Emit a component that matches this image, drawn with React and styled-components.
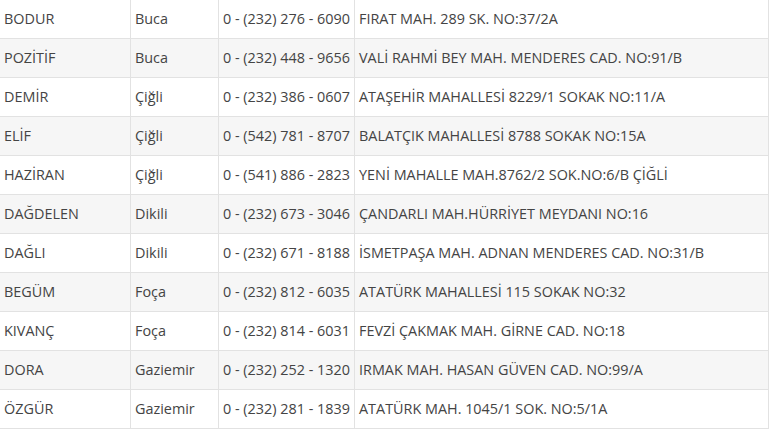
import React from 'react';
import styled, { createGlobalStyle } from 'styled-components';

const GlobalStyle = createGlobalStyle`
  html, body {
    margin: 0;
    padding: 0;
    background: #ffffff;
    overflow: hidden;
  }
`;

const Wrapper = styled.div`
  width: 770px;
  height: 429px;
  overflow: hidden;
  background: #ffffff;
`;

const Table = styled.table`
  border-collapse: collapse;
  margin-left: -1px;
  margin-top: -1px;
  width: 769px;
  table-layout: fixed;
  font-family: 'Open Sans', 'Noto Sans', sans-serif;
  font-size: 14.4px;
  color: #444444;
`;

const Col = styled.col`
  width: ${props => props.$width}px;
`;

const Row = styled.tr`
  background: ${props => (props.$striped ? '#f6f6f6' : '#ffffff')};
`;

const Cell = styled.td`
  height: 38px;
  padding: 0 4px;
  border: 1px solid #e2e2e2;
  white-space: nowrap;
  overflow: hidden;
  vertical-align: middle;
  line-height: 20px;
`;

const rows = [
  ['BODUR', 'Buca', '0 - (232) 276 - 6090', 'FIRAT MAH. 289 SK. NO:37/2A'],
  ['POZİTİF', 'Buca', '0 - (232) 448 - 9656', 'VALİ RAHMİ BEY MAH. MENDERES CAD. NO:91/B'],
  ['DEMİR', 'Çiğli', '0 - (232) 386 - 0607', 'ATAŞEHİR MAHALLESİ 8229/1 SOKAK NO:11/A'],
  ['ELİF', 'Çiğli', '0 - (542) 781 - 8707', 'BALATÇIK MAHALLESİ 8788 SOKAK NO:15A'],
  ['HAZİRAN', 'Çiğli', '0 - (541) 886 - 2823', 'YENİ MAHALLE MAH.8762/2 SOK.NO:6/B ÇİĞLİ'],
  ['DAĞDELEN', 'Dikili', '0 - (232) 673 - 3046', 'ÇANDARLI MAH.HÜRRİYET MEYDANI NO:16'],
  ['DAĞLI', 'Dikili', '0 - (232) 671 - 8188', 'İSMETPAŞA MAH. ADNAN MENDERES CAD. NO:31/B'],
  ['BEGÜM', 'Foça', '0 - (232) 812 - 6035', 'ATATÜRK MAHALLESİ 115 SOKAK NO:32'],
  ['KIVANÇ', 'Foça', '0 - (232) 814 - 6031', 'FEVZİ ÇAKMAK MAH. GİRNE CAD. NO:18'],
  ['DORA', 'Gaziemir', '0 - (232) 252 - 1320', 'IRMAK MAH. HASAN GÜVEN CAD. NO:99/A'],
  ['ÖZGÜR', 'Gaziemir', '0 - (232) 281 - 1839', 'ATATÜRK MAH. 1045/1 SOK. NO:5/1A'],
];

const widths = [131, 88, 136, 414];

const App = () => (
  <Wrapper>
    <GlobalStyle />
    <Table>
      <colgroup>
        {widths.map((w, i) => (
          <Col key={i} $width={w} />
        ))}
      </colgroup>
      <tbody>
        {rows.map((row, i) => (
          <Row key={row[0]} $striped={i % 2 === 1}>
            {row.map((text, j) => (
              <Cell key={j}>{text}</Cell>
            ))}
          </Row>
        ))}
      </tbody>
    </Table>
  </Wrapper>
);

export default App;
